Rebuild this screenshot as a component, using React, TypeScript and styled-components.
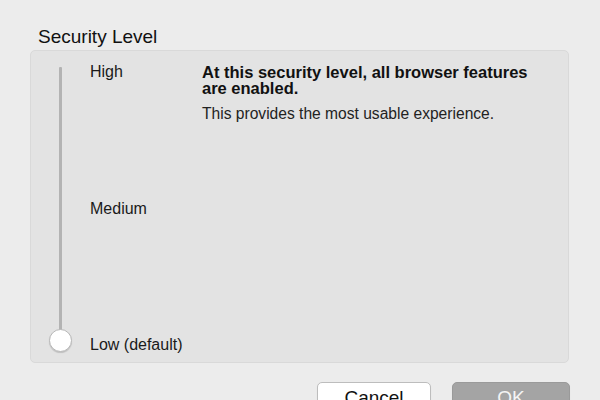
import React from "react";
import styled, { createGlobalStyle } from "styled-components";

const Global = createGlobalStyle`
  html, body { margin: 0; padding: 0; background: #ececec; }
  body { font-family: "Liberation Sans", Arial, Helvetica, sans-serif; color: #1a1a1a; }
`;

const Page = styled.div`
  width: 600px;
  height: 400px;
  overflow: hidden;
  box-sizing: border-box;
  padding: 26px 0 0 30px;
  display: flex;
  flex-direction: column;
`;

const Title = styled.div`
  font-size: 19px;
  line-height: 22px;
  margin-left: 8px;
  margin-bottom: 2px;
  color: #111;
`;

const Panel = styled.div`
  box-sizing: border-box;
  width: 539px;
  height: 313px;
  flex: none;
  background: #e3e3e3;
  border: 1px solid #d9d9d9;
  border-radius: 5px;
  display: flex;
  padding: 12px 0 8px 0;
`;

const SliderCol = styled.div`
  position: relative;
  width: 59px;
  flex: none;
`;

const Track = styled.div`
  position: absolute;
  left: 28px;
  top: 4px;
  bottom: 8px;
  width: 3px;
  background: #b3b3b3;
  border-radius: 1px;
`;

const Knob = styled.div`
  position: absolute;
  left: 18px;
  bottom: 2px;
  width: 23px;
  height: 23px;
  box-sizing: border-box;
  border-radius: 50%;
  background: #fff;
  border: 1px solid #b8b8b8;
  box-shadow: 0 1px 1px rgba(0, 0, 0, 0.15);
`;

const Labels = styled.div`
  width: 112px;
  flex: none;
  display: flex;
  flex-direction: column;
  justify-content: space-between;
`;

const Label = styled.div`
  font-size: 16px;
  line-height: 18px;
  color: #1a1a1a;
  white-space: nowrap;
`;

const Description = styled.div`
  width: 350px;
  padding-top: 1px;
`;

const Heading = styled.div`
  font-size: 16.5px;
  font-weight: bold;
  line-height: 16px;
  color: #111;
`;

const Sub = styled.div`
  font-size: 15.6px;
  line-height: 18px;
  margin-top: 9px;
  color: #222;
`;

const Buttons = styled.div`
  display: flex;
  justify-content: flex-end;
  gap: 21px;
  width: 540px;
  margin-top: 19px;
`;

const Button = styled.div<{ $primary?: boolean }>`
  box-sizing: border-box;
  width: ${(p) => (p.$primary ? "118px" : "114px")};
  height: 26px;
  flex: none;
  border-radius: 5px;
  display: flex;
  align-items: center;
  justify-content: center;
  font-size: 19px;
  color: ${(p) => (p.$primary ? "#f4f4f4" : "#111")};
  background: ${(p) => (p.$primary ? "#a4a4a4" : "#ffffff")};
  border: 1px solid ${(p) => (p.$primary ? "#9a9a9a" : "#bdbdbd")};
  box-shadow: 0 1px 1px rgba(0, 0, 0, 0.08);
  padding-top: 6px;
`;

export default function App() {
  return (
    <>
      <Global />
      <Page>
        <Title>Security Level</Title>
        <Panel>
          <SliderCol>
            <Track />
            <Knob />
          </SliderCol>
          <Labels>
            <Label>High</Label>
            <Label>Medium</Label>
            <Label>Low (default)</Label>
          </Labels>
          <Description>
            <Heading>
              At this security level, all browser features are enabled.
            </Heading>
            <Sub>This provides the most usable experience.</Sub>
          </Description>
        </Panel>
        <Buttons>
          <Button>Cancel</Button>
          <Button $primary>OK</Button>
        </Buttons>
      </Page>
    </>
  );
}
